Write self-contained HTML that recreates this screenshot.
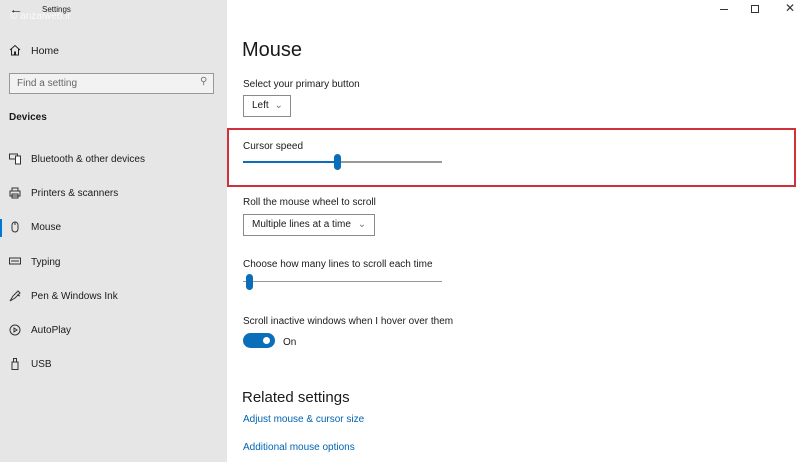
<!DOCTYPE html>
<html><head><meta charset="utf-8"><style>
*{margin:0;padding:0;box-sizing:border-box}
body{width:800px;height:462px;overflow:hidden;background:#fff;font-family:"Liberation Sans",sans-serif;color:#1a1a1a;position:relative;font-size:10px}
.side{position:absolute;left:0;top:0;width:227px;height:462px;background:#e6e6e6}
.a{position:absolute;white-space:nowrap}
.nav{position:absolute;left:31px;font-size:10px;margin-top:1px}
.ic{position:absolute;left:9px;width:12px;height:12px}
.lbl{position:absolute;left:243px;font-size:10px;margin-top:1px}
.box{position:absolute;border:1px solid #8a8a8a;background:#fff;font-size:10px;padding-left:8px;line-height:20px}
.link{position:absolute;left:243px;color:#0063b1;font-size:10px;margin-top:1px}
</style></head><body>
<div class="side"></div>
<div class="a" style="left:9px;top:1px;font-size:14px">&#8592;</div>
<div class="a" style="left:42px;top:5px;font-size:8px">Settings</div>
<div class="a" style="left:10px;top:11px;font-size:10px;color:#fff;opacity:.8">© anzalweb.ir</div>
<svg class="ic" style="top:44px" viewBox="0 0 12 12"><path d="M1 6L6 1.5 11 6M2.5 5v6h3V8h1v3h3V5" fill="none" stroke="#222" stroke-width="1"/></svg>
<div class="nav" style="top:44px;font-size:10.5px">Home</div>
<div class="a" style="left:9px;top:73px;width:205px;height:21px;border:1px solid #999;background:#f2f2f2"></div>
<div class="a" style="left:17px;top:78px;color:#666;font-size:10px">Find a setting</div>
<div class="a" style="left:200px;top:76px;color:#777;font-size:10px">&#9906;</div>
<div class="a" style="left:9px;top:112px;font-size:10px;font-weight:bold">Devices</div>
<svg class="ic" style="top:153px" viewBox="0 0 12 12"><rect x="0.5" y="1" width="8" height="5" fill="none" stroke="#333"/><rect x="6.5" y="3" width="5" height="8" fill="#fff" stroke="#333"/></svg>
<div class="nav" style="top:153px">Bluetooth &amp; other devices</div>
<svg class="ic" style="top:187px" viewBox="0 0 12 12"><path d="M3 4V1h6v3M1 4h10v5H1zM3 7h6v4H3z" fill="none" stroke="#333"/></svg>
<div class="nav" style="top:187px">Printers &amp; scanners</div>
<div class="a" style="left:0;top:219px;width:2px;height:18px;background:#0078d7"></div>
<svg class="ic" style="top:221px" viewBox="0 0 12 12"><rect x="3" y="1" width="6" height="10" rx="3" fill="none" stroke="#333"/><path d="M6 1v3" stroke="#333"/></svg>
<div class="nav" style="top:221px">Mouse</div>
<svg class="ic" style="top:255px" viewBox="0 0 12 12"><rect x="0.5" y="3" width="11" height="6" fill="none" stroke="#333"/><path d="M2 6h8" stroke="#333"/></svg>
<div class="nav" style="top:256px">Typing</div>
<svg class="ic" style="top:290px" viewBox="0 0 12 12"><path d="M1 11L4 6 9 1l2 2-5 5z M8 5l3 1" fill="none" stroke="#333"/></svg>
<div class="nav" style="top:290px">Pen &amp; Windows Ink</div>
<svg class="ic" style="top:324px" viewBox="0 0 12 12"><circle cx="6" cy="6" r="5" fill="none" stroke="#333"/><path d="M5 4v4l3-2z" fill="none" stroke="#333"/></svg>
<div class="nav" style="top:324px">AutoPlay</div>
<svg class="ic" style="top:358px" viewBox="0 0 12 12"><rect x="3" y="4" width="6" height="7.5" fill="none" stroke="#333"/><rect x="4.5" y="0.5" width="3" height="3.5" fill="none" stroke="#333"/></svg>
<div class="nav" style="top:358px">USB</div>

<div class="a" style="left:720px;top:9px;width:8px;height:1px;background:#333"></div>
<div class="a" style="left:751px;top:5px;width:8px;height:8px;border:1px solid #333"></div>
<div class="a" style="left:785px;top:1px;font-size:12px;color:#333">&#10005;</div>

<div class="a" style="left:242px;top:39px;font-size:20px;font-weight:300">Mouse</div>
<div class="lbl" style="top:78px">Select your primary button</div>
<div class="box" style="left:243px;top:95px;width:48px;height:22px">Left <span style="color:#777;margin-left:3px">&#8964;</span></div>

<div class="a" style="left:227px;top:128px;width:569px;height:59px;border:2px solid #d0303a"></div>
<div class="lbl" style="top:140px">Cursor speed</div>
<div class="a" style="left:243px;top:161px;width:95px;height:2px;background:#0a6fb8"></div>
<div class="a" style="left:338px;top:161px;width:104px;height:2px;background:#999"></div>
<div class="a" style="left:334px;top:154px;width:7px;height:16px;border-radius:4px;background:#0a6fb8"></div>

<div class="lbl" style="top:196px">Roll the mouse wheel to scroll</div>
<div class="box" style="left:243px;top:214px;width:132px;height:22px">Multiple lines at a time <span style="color:#777;margin-left:4px">&#8964;</span></div>
<div class="lbl" style="top:258px">Choose how many lines to scroll each time</div>
<div class="a" style="left:243px;top:281px;width:199px;height:1px;background:#999"></div>
<div class="a" style="left:246px;top:274px;width:7px;height:16px;border-radius:4px;background:#0a6fb8"></div>
<div class="lbl" style="top:315px">Scroll inactive windows when I hover over them</div>
<div class="a" style="left:243px;top:333px;width:32px;height:15px;border-radius:8px;background:#0a6fb8"></div>
<div class="a" style="left:263px;top:337px;width:7px;height:7px;border-radius:50%;background:#fff"></div>
<div class="a" style="left:283px;top:337px;font-size:10px">On</div>
<div class="a" style="left:242px;top:389px;font-size:15px">Related settings</div>
<div class="link" style="top:413px">Adjust mouse &amp; cursor size</div>
<div class="link" style="top:441px">Additional mouse options</div>
</body></html>
